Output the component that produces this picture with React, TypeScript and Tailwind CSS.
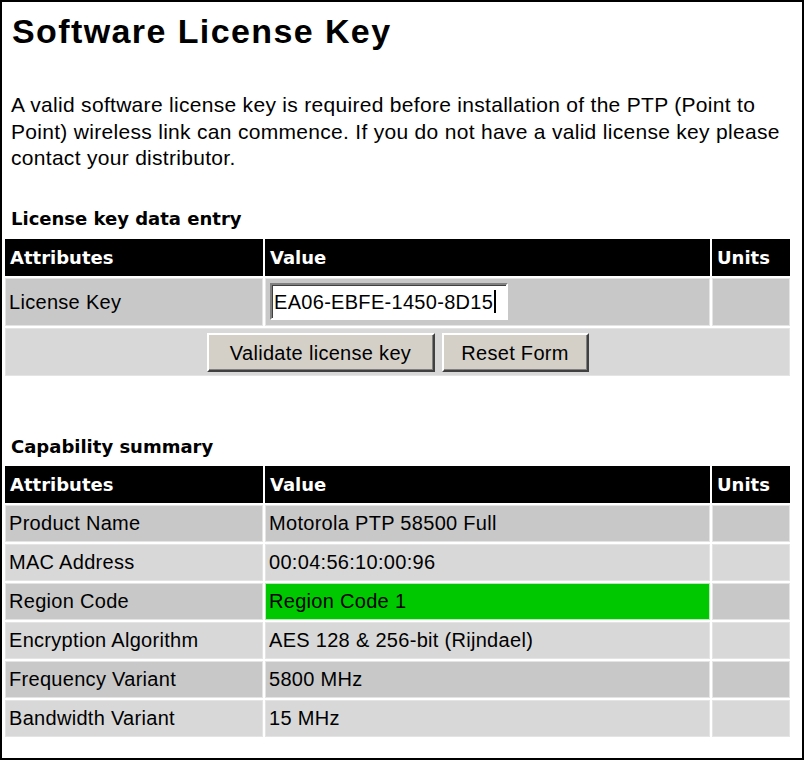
import React from 'react';

type Row = { label: string; value: string; dark: boolean; highlight?: boolean };

const capabilities: Row[] = [
  { label: 'Product Name', value: 'Motorola PTP 58500 Full', dark: true },
  { label: 'MAC Address', value: '00:04:56:10:00:96', dark: false },
  { label: 'Region Code', value: 'Region Code 1', dark: true, highlight: true },
  { label: 'Encryption Algorithm', value: 'AES 128 & 256-bit (Rijndael)', dark: false },
  { label: 'Frequency Variant', value: '5800 MHz', dark: true },
  { label: 'Bandwidth Variant', value: '15 MHz', dark: false },
];

const bodyFont = "font-['Liberation_Sans',Arial,sans-serif] text-[20px] tracking-[0.3px] text-black";
const headFont = "font-['DejaVu_Sans',Verdana,sans-serif] font-bold text-[18px] leading-[21px]";

const HeaderRow: React.FC = () => (
  <tr>
    <th className={`${headFont} h-[37px] w-[258px] border border-black bg-black pl-[4px] text-left text-white`}>Attributes</th>
    <th className={`${headFont} h-[37px] w-[445px] border border-black bg-black pl-[4px] text-left text-white`}>Value</th>
    <th className={`${headFont} h-[37px] w-[78px] border border-black bg-black pl-[4px] text-left text-white`}>Units</th>
  </tr>
);

const WinButton: React.FC<{ label: string; width: string }> = ({ label, width }) => (
  <button
    type="button"
    className={`${bodyFont} ${width} h-[39px] border-2 border-t-white border-l-white border-r-[#404040] border-b-[#404040] bg-[#d4d0c8] shadow-[inset_-1px_-1px_0_#808080] leading-none`}
  >
    {label}
  </button>
);

export default function App() {
  return (
    <div className="h-[760px] w-[804px] border-2 border-black bg-white px-[1px]">
      <h1 className="pt-[9px] pl-[9px] font-['Liberation_Sans',Arial,sans-serif] text-[34px] leading-[40px] font-bold tracking-[1.4px] text-black">
        Software License Key
      </h1>

      <p className={`${bodyFont} mt-[41px] pl-[8px] text-[21px] leading-[26.5px] tracking-[0.2px]`}>
        A valid software license key is required before installation of the PTP (Point to
        <br />
        Point) wireless link can commence. If you do not have a valid license key please
        <br />
        contact your distributor.
      </p>

      <h2 className={`${headFont} mt-[36px] pl-[8px] text-black`}>License key data entry</h2>

      <table className="mt-[8px] border-separate border-spacing-[2px]">
        <thead>
          <HeaderRow />
        </thead>
        <tbody>
          <tr>
            <td className={`${bodyFont} h-[48px] border border-[#e4e4e4] bg-[#c8c8c8] pl-[3px]`}>License Key</td>
            <td className="h-[48px] border border-[#e4e4e4] bg-[#c8c8c8] pl-[4px]">
              <div
                className={`${bodyFont} flex h-[37px] w-[238px] items-center border-2 border-t-[#808080] border-l-[#808080] border-r-white border-b-white bg-white pl-[2px] shadow-[inset_1px_1px_0_#404040]`}
              >
                <span>EA06-EBFE-1450-8D15</span>
                <span className="ml-[1px] h-[23px] w-[2px] bg-black" />
              </div>
            </td>
            <td className="h-[48px] border border-[#e4e4e4] bg-[#c8c8c8]" />
          </tr>
          <tr>
            <td colSpan={3} className="h-[48px] border border-[#e4e4e4] bg-[#d8d8d8]">
              <div className="flex items-center justify-center gap-[7px] pt-[2px]">
                <WinButton label="Validate license key" width="w-[228px]" />
                <WinButton label="Reset Form" width="w-[147px]" />
              </div>
            </td>
          </tr>
        </tbody>
      </table>

      <h2 className={`${headFont} mt-[58px] pl-[8px] text-black`}>Capability summary</h2>

      <table className="mt-[7px] border-separate border-spacing-[2px]">
        <thead>
          <HeaderRow />
        </thead>
        <tbody>
          {capabilities.map((row) => {
            const bg = row.dark ? 'bg-[#c8c8c8]' : 'bg-[#d8d8d8]';
            return (
              <tr key={row.label}>
                <td className={`${bodyFont} h-[37px] border border-[#e4e4e4] ${bg} pl-[3px]`}>{row.label}</td>
                <td
                  className={`${bodyFont} h-[37px] border pl-[3px] ${
                    row.highlight ? 'border-[#b8e8b8] bg-[#00c800]' : `border-[#e4e4e4] ${bg}`
                  }`}
                >
                  {row.value}
                </td>
                <td className={`h-[37px] border border-[#e4e4e4] ${bg}`} />
              </tr>
            );
          })}
        </tbody>
      </table>
    </div>
  );
}
